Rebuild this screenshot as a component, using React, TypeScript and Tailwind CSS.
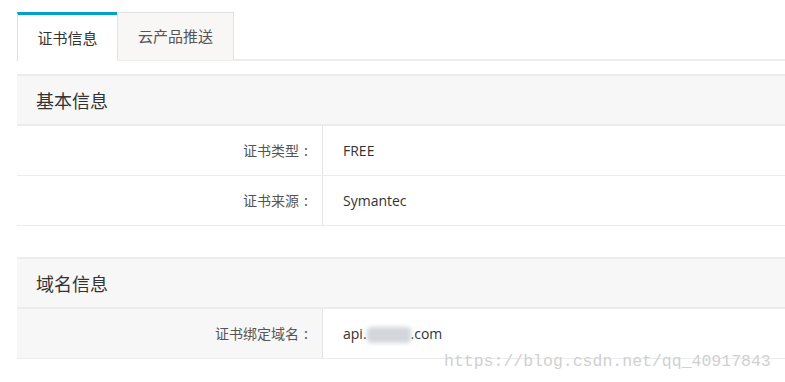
const cjk = { fontFamily: '"Noto Sans CJK SC", "Noto Sans", sans-serif' };

function Row({ label, children, shaded }: { label: string; children: React.ReactNode; shaded?: boolean }) {
  return (
    <div className="flex h-[50px] border-b border-[#ebecef]">
      <div
        className={`w-[306px] shrink-0 flex items-center justify-end pr-[14px] text-[14px] text-[#555] border-r border-[#e3e4e7] ${shaded ? "bg-[#f7f7f7]" : "bg-white"}`}
        style={cjk}
      >
        {label}
        <span className="ml-[5px]">:</span>
      </div>
      <div className="flex items-center pl-[20px] text-[14px] text-[#333]" style={{ fontFamily: '"Open Sans", sans-serif' }}>
        {children}
      </div>
    </div>
  );
}

function Header({ title }: { title: string }) {
  return (
    <div
      className="h-[52px] flex items-center pl-[19px] bg-[#f7f7f7] border-t-2 border-b-2 border-[#ececef] text-[18px] text-[#333]"
      style={cjk}
    >
      {title}
    </div>
  );
}

export default function App() {
  return (
    <div className="relative w-[785px] h-[382px] bg-white overflow-hidden pl-[17px] pt-[12px]">
      <div className="flex h-[49px] border-b-2 border-[#ececec]">
        <div
          className="w-[100px] h-[49px] flex items-center justify-center bg-white border-t-[3px] border-[#00a2ca] border-l border-l-[#e0e0e0] text-[15px] text-[#333]"
          style={cjk}
        >
          证书信息
        </div>
        <div
          className="w-[117px] h-[48px] flex items-center justify-center bg-[#f8f7f6] border border-[#e3e3e3] border-b-0 text-[15px] text-[#555]"
          style={cjk}
        >
          云产品推送
        </div>
      </div>

      <div className="mt-[13px]">
        <Header title="基本信息" />
        <Row label="证书类型">FREE</Row>
        <Row label="证书来源">Symantec</Row>
      </div>

      <div className="mt-[31px]">
        <Header title="域名信息" />
        <Row label="证书绑定域名" shaded>
          api.
          <span className="inline-block w-[44px] h-[16px] mt-[3px] bg-[#d3d6db] blur-[2px] rounded"></span>
          .com
        </Row>
      </div>

      <div
        className="absolute left-[444px] top-[352px] text-[16.5px] text-[#d0d0d0] leading-[20px]"
        style={{ fontFamily: '"Liberation Mono", monospace', textShadow: "0 0 1px #fff" }}
      >
        https://blog.csdn.net/qq_40917843
      </div>
    </div>
  );
}
